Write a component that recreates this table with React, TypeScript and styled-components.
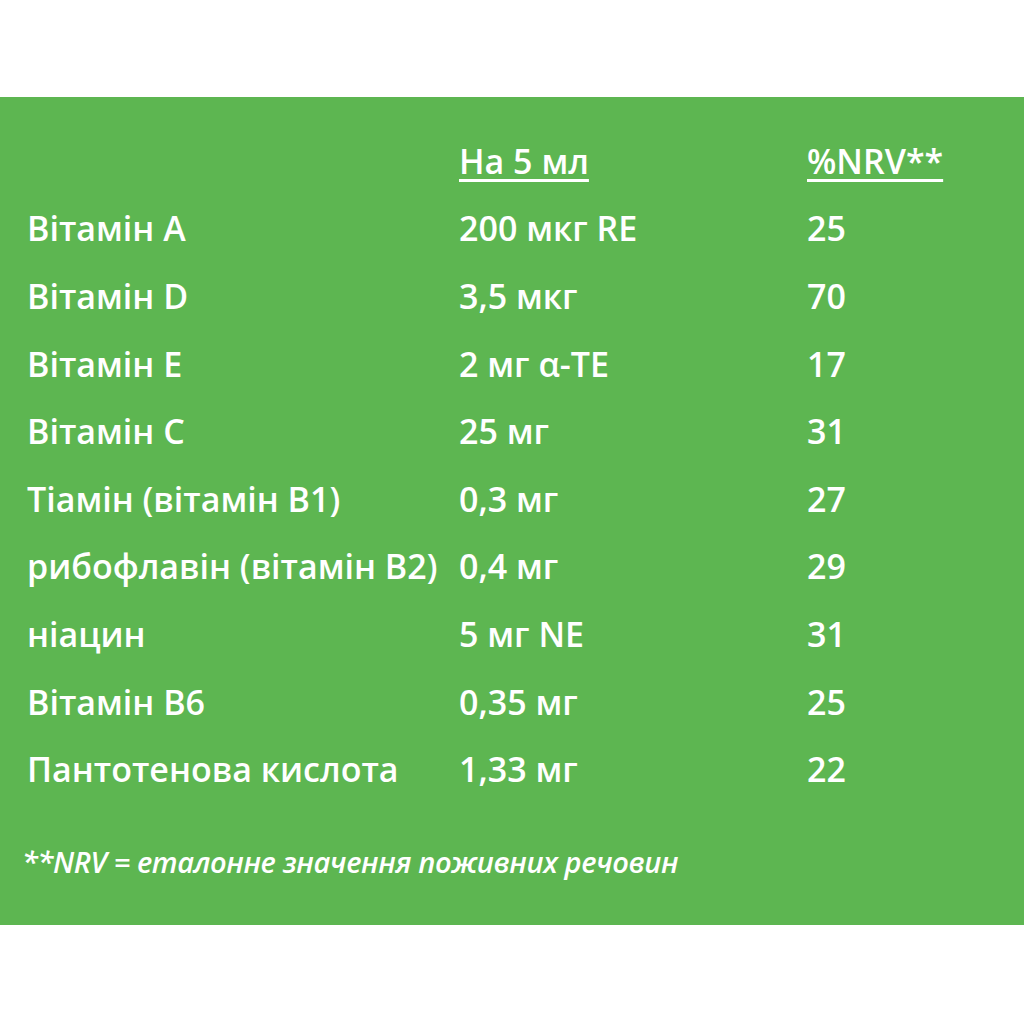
import React from "react";
import styled, { createGlobalStyle } from "styled-components";

const Global = createGlobalStyle`
  html, body { margin: 0; padding: 0; background: #ffffff; }
  body { font-family: "Open Sans", "Noto Sans", sans-serif; }
`;

const Page = styled.div`
  width: 1024px;
  height: 1024px;
  background: #ffffff;
  padding-top: 97px;
  box-sizing: border-box;
`;

const Panel = styled.section`
  background: #5db651;
  height: 828px;
  box-sizing: border-box;
  padding: 30px 0 0 27px;
  color: #ffffff;
`;

const Table = styled.div`
  display: grid;
  grid-template-columns: 432px 348px 1fr;
  grid-auto-rows: 67.6px;
  align-items: center;
`;

const Cell = styled.div<{ $head?: boolean }>`
  font-size: 34px;
  font-weight: 600;
  letter-spacing: 0;
  white-space: nowrap;
  line-height: 1;
  text-decoration: ${(p) => (p.$head ? "underline" : "none")};
  text-decoration-thickness: 3px;
  text-underline-offset: 5px;
`;

const Note = styled.p`
  margin: 44px 0 0 -5px;
  font-size: 29px;
  font-style: italic;
  font-weight: 600;
  letter-spacing: -0.4px;
  line-height: 30px;
`;

const rows: [string, string, string][] = [
  ["Вітамін A", "200 мкг RE", "25"],
  ["Вітамін D", "3,5 мкг", "70"],
  ["Вітамін E", "2 мг α-TE", "17"],
  ["Вітамін C", "25 мг", "31"],
  ["Тіамін (вітамін B1)", "0,3 мг", "27"],
  ["рибофлавін (вітамін B2)", "0,4 мг", "29"],
  ["ніацин", "5 мг NE", "31"],
  ["Вітамін B6", "0,35 мг", "25"],
  ["Пантотенова кислота", "1,33 мг", "22"],
];

export default function App() {
  return (
    <>
      <Global />
      <Page>
        <Panel>
          <Table>
            <Cell />
            <Cell $head>На 5 мл</Cell>
            <Cell $head>%NRV**</Cell>
            {rows.map(([a, b, c]) => (
              <React.Fragment key={a}>
                <Cell>{a}</Cell>
                <Cell>{b}</Cell>
                <Cell>{c}</Cell>
              </React.Fragment>
            ))}
          </Table>
          <Note>**NRV = еталонне значення поживних речовин</Note>
        </Panel>
      </Page>
    </>
  );
}
